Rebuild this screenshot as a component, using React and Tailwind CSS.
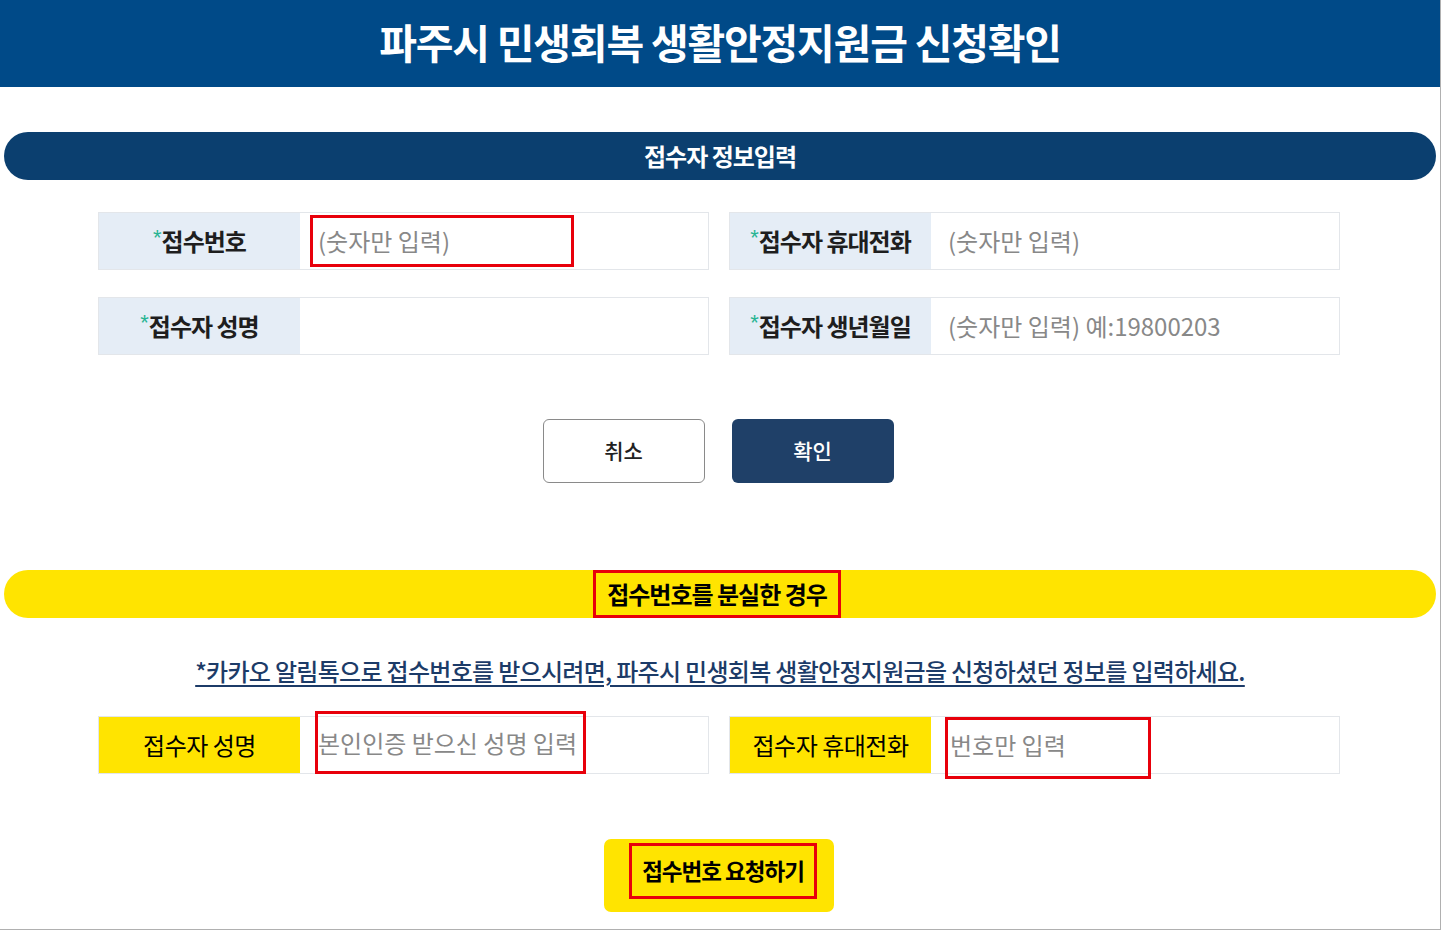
import React from "react"

const font = { fontFamily: '"Noto Sans CJK KR", "Noto Sans", sans-serif' }

function InfoField({ label, placeholder, highlight }) {
    return (
        <div className="flex h-[58px] w-[611px] border border-[#e3e6ea] bg-white">
            <div className="flex w-[201px] shrink-0 items-center justify-center bg-[#e5edf6] text-[24px] font-bold tracking-[-1px] text-[#1e1e1e]">
                <span className="mr-[1px] mt-[-6px] text-[22px] leading-none font-normal text-[#27b492]" style={{ fontFamily: '"Liberation Sans", sans-serif' }}>*</span>
                {label}
            </div>
            <div className="flex flex-1 items-center">
                {highlight ? (
                    <div className="ml-[10px] flex h-[52px] w-[264px] items-center border-[3px] border-[#e8000b] pl-[5px] text-[24px] text-[#888]">
                        {placeholder}
                    </div>
                ) : (
                    <span className="pl-[17px] text-[24px] text-[#888]">{placeholder}</span>
                )}
            </div>
        </div>
    )
}

export default function App() {
    return (
        <div className="h-[931px] w-[1442px] overflow-hidden bg-white" style={font}>
            <div className="h-[930px] w-[1441px] border-r border-b border-[#b0b0b0]">
                <header className="flex h-[87px] items-center justify-center bg-[#004a88] pb-[4px]">
                    <h1 className="text-[41px] font-bold tracking-[-1.2px] text-white">파주시 민생회복 생활안정지원금 신청확인</h1>
                </header>

                <div className="mx-[4px] mt-[45px] flex h-[48px] items-center justify-center rounded-full bg-[#0b3f6f]">
                    <span className="text-[24px] font-bold tracking-[-1px] text-white">접수자 정보입력</span>
                </div>

                <div className="mt-[32px] flex flex-col gap-[27px] pl-[98px]">
                    <div className="flex gap-[20px]">
                        <InfoField label="접수번호" placeholder="(숫자만 입력)" highlight />
                        <InfoField label="접수자 휴대전화" placeholder="(숫자만 입력)" />
                    </div>
                    <div className="flex gap-[20px]">
                        <InfoField label="접수자 성명" placeholder="" />
                        <InfoField label="접수자 생년월일" placeholder="(숫자만 입력) 예:19800203" />
                    </div>
                </div>

                <div className="mt-[64px] flex justify-center gap-[27px] pr-[4px]">
                    <button className="h-[64px] w-[162px] rounded-[6px] border border-[#8a8a8a] bg-white text-[21px] font-medium text-[#222]">취소</button>
                    <button className="h-[64px] w-[162px] rounded-[6px] bg-[#1f4068] text-[21px] font-medium text-white">확인</button>
                </div>

                <div className="mx-[4px] mt-[87px] flex h-[48px] items-center justify-center rounded-full bg-[#ffe400]">
                    <span className="mr-[6px] flex h-[48px] items-center border-[3px] border-[#e8000b] px-[11px] text-[24px] font-bold tracking-[-1px] text-black">
                        접수번호를 분실한 경우
                    </span>
                </div>

                <p className="mt-[35px] text-center text-[24px] font-medium tracking-[-0.7px] text-[#1c3b68] underline underline-offset-[4px]">
                    *카카오 알림톡으로 접수번호를 받으시려면, 파주시 민생회복 생활안정지원금을 신청하셨던 정보를 입력하세요.
                </p>

                <div className="mt-[27px] flex gap-[20px] pl-[98px]">
                    <div className="flex h-[58px] w-[611px] border border-[#e3e6ea] bg-white">
                        <div className="flex w-[201px] shrink-0 items-center justify-center bg-[#ffe400] text-[24px] tracking-[-0.5px] text-black">접수자 성명</div>
                        <div className="relative flex-1">
                            <div className="absolute left-[15px] top-[-6px] flex h-[63px] w-[271px] items-center border-[3px] border-[#e8000b] text-[24px] text-[#888]">
                                본인인증 받으신 성명 입력
                            </div>
                        </div>
                    </div>
                    <div className="flex h-[58px] w-[611px] border border-[#e3e6ea] bg-white">
                        <div className="flex w-[201px] shrink-0 items-center justify-center bg-[#ffe400] text-[24px] tracking-[-0.5px] text-black">접수자 휴대전화</div>
                        <div className="relative flex-1">
                            <div className="absolute left-[14px] top-[0px] flex h-[62px] w-[206px] items-center border-[3px] border-[#e8000b] pb-[6px] pl-[2px] text-[24px] text-[#888]">
                                번호만 입력
                            </div>
                        </div>
                    </div>
                </div>

                <div className="mt-[65px] flex justify-center pr-[2px]">
                    <button className="flex h-[73px] w-[230px] items-start justify-center rounded-[7px] bg-[#ffe400] pt-[4px] pl-[8px]">
                        <span className="flex h-[56px] w-[188px] items-center justify-center border-[3px] border-[#e8000b] text-[22.5px] font-bold tracking-[-1px] text-black">
                            접수번호 요청하기
                        </span>
                    </button>
                </div>
            </div>
        </div>
    )
}
